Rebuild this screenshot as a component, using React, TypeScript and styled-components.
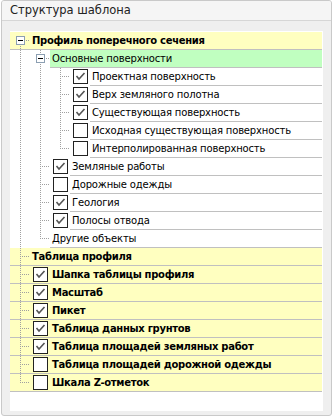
import React from "react";
import styled, { createGlobalStyle } from "styled-components";

type TreeNode = {
	label: string;
	check?: boolean;
	green?: boolean;
	children?: TreeNode[];
};

type FlatRow = {
	node: TreeNode;
	level: number;
	guides: boolean[];
	isLast: boolean;
	isFirst: boolean;
};

const tree: TreeNode[] = [
	{
		label: "Профиль поперечного сечения",
		children: [
			{
				label: "Основные поверхности",
				green: true,
				children: [
					{ label: "Проектная поверхность", check: true },
					{ label: "Верх земляного полотна", check: true },
					{ label: "Существующая поверхность", check: true },
					{ label: "Исходная существующая поверхность", check: false },
					{ label: "Интерполированная поверхность", check: false },
				],
			},
			{ label: "Земляные работы", check: true },
			{ label: "Дорожные одежды", check: false },
			{ label: "Геология", check: true },
			{ label: "Полосы отвода", check: true },
			{ label: "Другие объекты" },
		],
	},
	{ label: "Таблица профиля" },
	{ label: "Шапка таблицы профиля", check: true },
	{ label: "Масштаб", check: true },
	{ label: "Пикет", check: true },
	{ label: "Таблица данных грунтов", check: true },
	{ label: "Таблица площадей земляных работ", check: true },
	{ label: "Таблица площадей дорожной одежды", check: false },
	{ label: "Шкала Z-отметок", check: false },
];

const flatten = (nodes: TreeNode[], level: number, guides: boolean[]): FlatRow[] =>
	nodes.flatMap((node, i) => {
		const isLast = i === nodes.length - 1;
		const row: FlatRow = { node, level, guides, isLast, isFirst: level === 0 && i === 0 };
		const kids = node.children ? flatten(node.children, level + 1, [...guides, !isLast]) : [];
		return [row, ...kids];
	});

const GlobalStyle = createGlobalStyle`
	html, body {
		margin: 0;
		background: #ffffff;
	}
`;

const Panel = styled.div`
	width: 331px;
	height: 416px;
	margin-left: 1px;
	box-sizing: border-box;
	border: 1px solid #c9c9c9;
	border-radius: 3px;
	background: #efefef;
	display: flex;
	flex-direction: column;
	overflow: hidden;
`;

const Header = styled.div`
	height: 20px;
	box-sizing: border-box;
	border-bottom: 1px solid #d6d6d6;
	background: #f5f5f5;
	padding-left: 8px;
	font-family: "DejaVu Sans", sans-serif;
	font-size: 11.5px;
	line-height: 19px;
	color: #222;
`;

const Body = styled.div`
	flex: 1;
	padding: 10px 8px 4px 8px;
	display: flex;
`;

const TreeBox = styled.div`
	flex: 1;
	background: #ffffff;
	padding: 1px 1px 0 0;
`;

const Row = styled.div<{ $root: boolean }>`
	display: flex;
	height: 18px;
	box-sizing: border-box;
	background: ${(p) => (p.$root ? "#ffffc0" : "transparent")};
	border-bottom: ${(p) => (p.$root ? "1px solid #c0c0c0" : "none")};
`;

const dotsV = `
	background-image: linear-gradient(to bottom, #a0a0a0 50%, transparent 50%);
	background-size: 1px 2px;
	background-repeat: repeat-y;
`;

const Guide = styled.div<{ $line: boolean }>`
	width: 20px;
	flex: none;
	${(p) => (p.$line ? dotsV : "")}
	background-position: 10px 0;
`;

const Connector = styled.div<{ $first: boolean; $last: boolean }>`
	width: 20px;
	flex: none;
	position: relative;

	&::before {
		content: "";
		position: absolute;
		left: 10px;
		width: 1px;
		top: ${(p) => (p.$first ? "8px" : "0")};
		bottom: ${(p) => (p.$last ? "9px" : "0")};
		${dotsV}
	}

	&::after {
		content: "";
		position: absolute;
		left: 10px;
		right: 0;
		top: 8px;
		height: 1px;
		background-image: linear-gradient(to right, #a0a0a0 50%, transparent 50%);
		background-size: 2px 1px;
		background-repeat: repeat-x;
	}
`;

const Expander = styled.span`
	position: absolute;
	left: 6px;
	top: 4px;
	width: 9px;
	height: 9px;
	box-sizing: border-box;
	border: 1px solid #8c9fb2;
	background: #ffffff;
	z-index: 1;

	&::after {
		content: "";
		position: absolute;
		left: 1px;
		top: 3px;
		width: 5px;
		height: 1px;
		background: #000;
	}
`;

const Check = styled.span`
	flex: none;
	width: 15px;
	height: 15px;
	box-sizing: border-box;
	margin: 1px 2px 0 3px;
	border: 1px solid #222;
	background: #fff;
	display: flex;
	align-items: center;
	justify-content: center;
`;

const Cell = styled.div<{ $bg: string; $line: boolean; $bold: boolean }>`
	flex: 1;
	min-width: 0;
	box-sizing: border-box;
	height: ${(p) => (p.$line ? "18px" : "17px")};
	padding-left: 2px;
	background: ${(p) => p.$bg};
	border-bottom: ${(p) => (p.$line ? "1px solid #c0c0c0" : "none")};
	font-family: "DejaVu Sans", sans-serif;
	font-size: 10px;
	letter-spacing: ${(p) => (p.$bold ? "-0.3px" : "-0.15px")};
	font-weight: ${(p) => (p.$bold ? 700 : 400)};
	line-height: 17px;
	color: #000;
	white-space: nowrap;
	overflow: hidden;
`;

const CheckMark = () => (
	<svg width="11" height="11" viewBox="0 0 11 11">
		<polyline points="1.5,5 4,8 9.5,2" fill="none" stroke="#555" strokeWidth="1.6" />
	</svg>
);

const TreeRow = ({ row }: { row: FlatRow }) => {
	const { node, level, guides } = row;
	const root = level === 0;
	const hasCheck = node.check !== undefined;
	const bg = node.green ? "#c0ffc0" : root ? "#ffffc0" : "#ffffff";
	return (
		<Row $root={root}>
			{guides.map((g, i) => (
				<Guide key={i} $line={g} />
			))}
			<Connector $first={row.isFirst} $last={row.isLast}>
				{node.children && <Expander />}
			</Connector>
			{hasCheck && <Check>{node.check && <CheckMark />}</Check>}
			<Cell $bg={bg} $line={!root} $bold={root}>
				{node.label}
			</Cell>
		</Row>
	);
};

export default function App() {
	const rows = flatten(tree, 0, []);
	return (
		<>
			<GlobalStyle />
			<Panel>
				<Header>Структура шаблона</Header>
				<Body>
					<TreeBox>
						{rows.map((r) => (
							<TreeRow key={r.node.label} row={r} />
						))}
					</TreeBox>
				</Body>
			</Panel>
		</>
	);
}
